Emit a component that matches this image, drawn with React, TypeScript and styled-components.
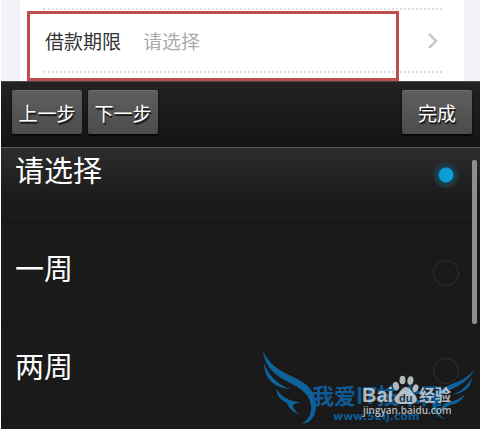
import React, { useState } from "react";
import styled, { createGlobalStyle } from "styled-components";

const GlobalStyle = createGlobalStyle`
  * { box-sizing: border-box; }
  body {
    margin: 0;
    background: #fff;
    font-family: "Noto Sans CJK SC", sans-serif;
  }
  button, input { font: inherit; margin: 0; }
`;

const Screen = styled.main`
  position: relative;
  min-height: 100vh;
  padding-left: 1px;
  display: flex;
  flex-direction: column;
  overflow: hidden;
`;

const FormArea = styled.section`
  position: relative;
  height: 81px;
  padding: 0 16px 0 19px;
  background: #f3f2f8;
`;

const FormSheet = styled.div`
  height: 100%;
  padding: 8px 22px 0 23px;
  background: #fff;
`;

const Field = styled.button`
  display: flex;
  align-items: center;
  width: 100%;
  height: 65px;
  padding: 0 4px 0 2px;
  border: 0;
  border-top: 2px dotted #dedede;
  border-bottom: 2px dotted #dedede;
  background: none;
  font-size: 19px;
  line-height: 28px;
  text-align: left;
`;

const FieldLabel = styled.span`
  width: 98px;
  color: #333;
`;

const FieldValue = styled.span`
  flex: 1;
  color: #aaa;
`;

const Highlight = styled.div`
  position: absolute;
  top: 11px;
  bottom: 0;
  left: 26px;
  right: 81px;
  border: 3px solid #c04d4d;
  pointer-events: none;
`;

const Picker = styled.section`
  flex: 1;
  display: flex;
  flex-direction: column;
  background: #1a1a1a;
`;

const Toolbar = styled.div`
  display: flex;
  gap: 6px;
  height: 66px;
  padding: 8px 8px 0 11px;
  border-top: 1px solid #484848;
  background: linear-gradient(#222, #141414);
`;

const ToolButton = styled.button<{ $end?: boolean }>`
  width: 70px;
  height: 44px;
  padding: 1px 0 0;
  margin-left: ${(p) => (p.$end ? "auto" : "0")};
  border: 0;
  border-top: 1px solid #6c6c6c;
  border-radius: 2px;
  background: linear-gradient(#5e5e5e, #4c4c4c);
  box-shadow: 0 2px 2px #050505;
  color: #fff;
  font-size: 19px;
  line-height: 28px;
  text-shadow: 1px 2px 1px #111;
  white-space: nowrap;
`;

const ListFrame = styled.div`
  flex: 1 0 282px;
  height: 282px;
  display: flex;
  overflow: hidden;
  padding-right: 3px;
  border-top: 1px solid #5c5c5c;
  background: linear-gradient(#2d2d2d, #1a1a1a 52px);
`;

const Options = styled.div`
  flex: 1;
  margin-top: -22px;
`;

const Option = styled.label`
  display: flex;
  align-items: center;
  justify-content: space-between;
  height: 98px;
  padding: 0 13px 0 14px;
  border-bottom: 1px solid #141414;
  color: #fff;
  font-size: 29px;
  line-height: 40px;
`;

const OptionText = styled.span`
  padding-bottom: 12px;
`;

const Radio = styled.input`
  appearance: none;
  width: 26px;
  height: 26px;
  border: 1px solid #303030;
  border-radius: 50%;

  &:checked {
    border-color: #253439;
    background: radial-gradient(circle, #0b9fd6 0 6px, #0d8fc2 7px, #124253 8px, #223238 11px, #293236 13px);
  }
`;

const Scrollbar = styled.div`
  width: 5px;
  height: 164px;
  margin-top: 12px;
  border-radius: 2px;
  background: #8e8e8e;
`;

const Watermark = styled.svg`
  position: absolute;
  top: 345px;
  right: 0;
  width: 225px;
  height: 84px;
  pointer-events: none;
`;

const options = ["请选择", "一周", "两周"];

export default function App() {
  const [selected, setSelected] = useState(0);

  return (
    <>
      <GlobalStyle />
      <Screen>
        <FormArea>
          <FormSheet>
            <Field type="button">
              <FieldLabel>借款期限</FieldLabel>
              <FieldValue>请选择</FieldValue>
              <svg width="10" height="16" viewBox="0 0 10 16" fill="none" stroke="#c4c4c4" strokeWidth="2.4" aria-hidden="true">
                <path d="M1 1 8 8 1 15" />
              </svg>
            </Field>
          </FormSheet>
          <Highlight />
        </FormArea>

        <Picker>
          <Toolbar>
            <ToolButton type="button">上一步</ToolButton>
            <ToolButton type="button">下一步</ToolButton>
            <ToolButton type="button" $end>完成</ToolButton>
          </Toolbar>
          <ListFrame>
            <Options role="radiogroup" aria-label="借款期限">
              {options.map((text, i) => (
                <Option key={text}>
                  <OptionText>{text}</OptionText>
                  <Radio type="radio" name="term" checked={selected === i} onChange={() => setSelected(i)} />
                </Option>
              ))}
            </Options>
            <Scrollbar />
          </ListFrame>
        </Picker>

        <Watermark viewBox="255 345 225 84">
          <g fill="#0f639c">
            <path d="M263 351C269 364 277 369 291 376C307 383 316 391 316 405C316 416 311 423 302 424C309 419 312 413 311 406C310 395 302 389 290 383C274 375 265 367 263 351Z" />
            <path d="M264 363C268 375 278 385 290 389C276 388 264 380 264 363Z" />
            <path d="M276 389C282 397 290 402 300 402C297 404 294 403 293 405C293 409 297 413 300 415C291 411 288 407 287 403C280 400 277 395 276 389Z" />
            <path d="M475 369C469 380 461 385 450 390C439 395 435 402 437 409C439 415 442 418 447 420C437 417 431 411 433 402C435 391 446 386 457 382C465 379 471 374 475 369Z" />
            <path d="M472 377C471 388 464 393 452 395C462 391 468 385 472 377Z" />
            <path d="M465 394C461 402 456 404 450 405C445 407 442 410 440 414C440 408 443 403 449 402C456 401 461 398 465 394Z" />
          </g>
          <g fill="#0f5a94" fontWeight="700">
            <text x="312" y="404" fontSize="22" fontFamily='"Noto Sans CJK SC", sans-serif'>我爱IT技术网</text>
            <text x="333" y="420" fontSize="11" fontFamily='"DejaVu Sans", sans-serif'>www.52ij.com</text>
          </g>
          <g fill="#d6dade" opacity="0.82">
            <text x="362" y="402" fontSize="20" fontWeight="700" fontFamily='"Liberation Sans", sans-serif'>Bai</text>
            <ellipse cx="396" cy="386" rx="3" ry="4.2" transform="rotate(-18 396 386)" />
            <ellipse cx="402.5" cy="380" rx="3" ry="4.3" />
            <ellipse cx="410.5" cy="380.5" rx="3" ry="4.3" transform="rotate(8 410 380)" />
            <ellipse cx="415.5" cy="388" rx="2.8" ry="4" transform="rotate(20 415 388)" />
            <path d="M406 387C410 387 411 391 414 394C419 398 417 404 411 404H400C394 404 393 398 397 395C401 391 402 387 406 387Z" />
            <text x="399" y="402" fontSize="11" fontWeight="700" fill="#1b3546" fontFamily='"Liberation Sans", sans-serif'>du</text>
            <text x="419" y="401" fontSize="16" fontWeight="700" fontFamily='"Noto Sans CJK SC", sans-serif'>经验</text>
            <text x="363" y="414" fontSize="10" fontWeight="600" fontFamily='"Open Sans", sans-serif'>jingyan.baidu.com</text>
          </g>
        </Watermark>
      </Screen>
    </>
  );
}
